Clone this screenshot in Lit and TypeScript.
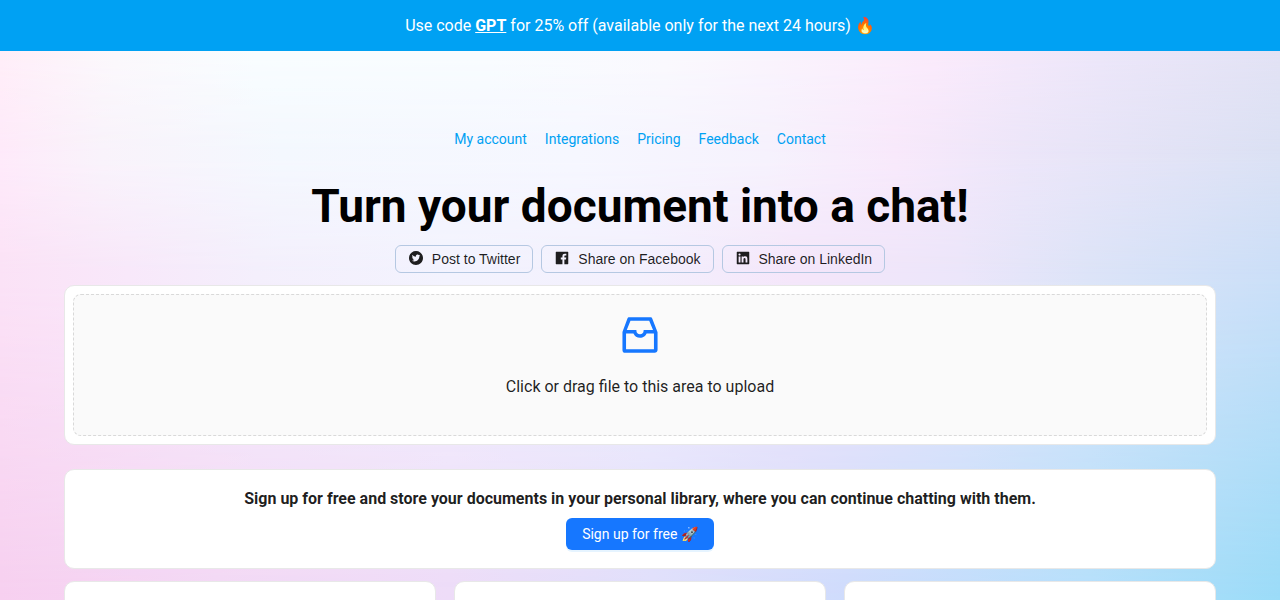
import { LitElement, html, css } from "lit";
import { customElement } from "lit/decorators.js";

const TWITTER =
  "M512 64C264.6 64 64 264.6 64 512s200.6 448 448 448 448-200.6 448-448S759.4 64 512 64zm215.3 337.7c.3 4.7.3 9.6.3 14.4 0 146.8-111.8 315.9-316.1 315.9-63 0-121.4-18.3-170.6-49.8 9 1 17.6 1.4 26.8 1.4 52 0 99.8-17.6 137.9-47.4-48.8-1-89.8-33-103.8-77 17.1 2.5 32.5 2.5 50.1-2a111 111 0 01-88.9-109v-1.4c14.7 8.3 32 13.4 50.1 14.1a111.13 111.13 0 01-49.5-92.4c0-20.7 5.4-39.6 15.1-56a315.28 315.28 0 00229 116.1C492 353.1 548.4 292 616.2 292c32 0 60.8 13.4 81.1 35 25.1-4.7 49.1-14.1 70.5-26.7-8.3 25.7-25.7 47.4-48.8 61.1 22.4-2.4 44-8.6 64-17.3-15.1 22.2-34 41.9-55.7 57.6z";
const FACEBOOK =
  "M880 112H144c-17.7 0-32 14.3-32 32v736c0 17.7 14.3 32 32 32h736c17.7 0 32-14.3 32-32V144c0-17.7-14.3-32-32-32zm-92.4 233.5h-63.9c-50.1 0-59.8 23.8-59.8 58.8v77.1h119.6l-15.6 120.7h-104V912H539.2V602.2H434.9V481.4h104.3v-89c0-103.3 63.1-159.6 155.3-159.6 44.2 0 82.1 3.3 93.2 4.8v107.9z";
const LINKEDIN =
  "M880 112H144c-17.7 0-32 14.3-32 32v736c0 17.7 14.3 32 32 32h736c17.7 0 32-14.3 32-32V144c0-17.7-14.3-32-32-32zM349.3 793.7H230.6V411.9h118.7v381.8zm-59.3-434a68.8 68.8 0 1168.8-68.8c-.1 38-30.9 68.8-68.8 68.8zm503.7 434H675.1V608c0-44.3-.8-101.2-61.7-101.2-61.7 0-71.2 48.2-71.2 98v188.9H423.7V411.9h113.8v52.2h1.6c15.8-30 54.5-61.7 112.3-61.7 120.2 0 142.3 79.1 142.3 181.9v209.4z";
const INBOX =
  "M885.2 446.3l-.2-.8-112.2-285.1c-5-16.1-19.9-27.2-36.8-27.2H281.2c-17 0-32.1 11.3-36.9 27.6L139.4 443l-.3.7-.2.8c-1.3 4.9-1.7 9.9-1 14.8-.1 1.6-.2 3.2-.2 4.8V830a60.9 60.9 0 0060.8 60.8h627.2c33.5 0 60.8-27.3 60.9-60.8V464.1c0-1.3 0-2.6-.1-3.7.4-4.9 0-9.6-1.3-14.1zm-295.8-43l-.3 15.7c-.8 44.9-31.8 75.1-77.1 75.1-22.1 0-41.1-7.1-54.8-20.6S436 441.2 435.6 419l-.3-15.7H229.5L309 210h399.2l81.7 193.3H589.4zm-375 76.8h157.3c24.3 57.1 76 90.8 140.4 90.8 33.7 0 65-9.4 90.3-27.2 22.2-15.6 39.5-37.4 50.7-63.6h156.5V814H214.4V480.1z";

const icon = (path: string) =>
  html`<svg class="icon" viewBox="0 0 1024 1024" aria-hidden="true"><path d=${path}></path></svg>`;

const LINKS = ["My account", "Integrations", "Pricing", "Feedback", "Contact"];
const SHARES = [
  { label: "Post to Twitter", path: TWITTER },
  { label: "Share on Facebook", path: FACEBOOK },
  { label: "Share on LinkedIn", path: LINKEDIN },
];

@customElement("app-root")
export class AppRoot extends LitElement {
  static styles = css`
    :host {
      display: block;
      position: relative;
      isolation: isolate;
      height: 100vh;
      overflow: hidden;
      font-family: Roboto, "Noto Sans", sans-serif;
      font-size: 14px;
      line-height: 22px;
      color: rgba(0, 0, 0, 0.88);
    }
    * {
      box-sizing: border-box;
    }
    /* Backdrop: horizontal colour ramps that fade into one another downwards. */
    .wash {
      position: absolute;
      inset: 0;
      z-index: -1;
    }
    .low {
      background: linear-gradient(to right, #f7d0f0, #f4d8f5 17%, #eedcf8 35%, #e0dffb 51%, #cfdcfc 66%, #b5e0fb 85%, #9bdcf8);
    }
    .mid {
      background: linear-gradient(to right, #fbe2f6, #f8e8fa 10%, #f4effc 20%, #f3f3fe 35%, #f3f0fd 50%, #f5e6fa 62%, #ece6fa 75%, #dde4f8 85%, #cbdff8);
      mask-image: linear-gradient(to bottom, #000 46%, transparent);
    }
    .upper {
      background: linear-gradient(to right, #feeafa, #f9f3fb 8%, #f4f8fe 22%, #f6f7ff 45%, #f6f2fd 60%, #f8e9fb 70%, #ece6f9 80%, #dbe1f4);
      mask-image: linear-gradient(to bottom, #000 26%, transparent 46%);
    }
    .high {
      background: linear-gradient(to right, #ffeef8, #fbf8fc 9%, #f8fdff 20%, #f8fcff 38%, #faf9fe 52%, #faeefc 68%, #faeafb 73%, #ece6f9 86%, #e2e2f4);
      mask-image: linear-gradient(to bottom, #000 9%, transparent 26%);
    }
    .banner {
      padding: 15px 16px 14px;
      background: #00a1f3;
      color: #fff;
      font-size: 16px;
      text-align: center;
    }
    .code {
      font-weight: 700;
      text-decoration: underline;
    }
    .page {
      padding: 77px 5% 0;
    }
    .nav {
      display: flex;
      flex-wrap: wrap;
      justify-content: center;
      gap: 18px;
    }
    .link {
      color: #00a1f3;
      text-decoration: none;
    }
    .title {
      margin: 28px 0 11px;
      color: #000;
      font-size: 46px;
      line-height: 56px;
      font-weight: 700;
      text-align: center;
    }
    .shares {
      display: flex;
      flex-wrap: wrap;
      justify-content: center;
      gap: 8px;
    }
    .share {
      display: flex;
      align-items: center;
      gap: 8px;
      height: 28px;
      padding: 0 12px;
      border: 1px solid #b5c8e2;
      border-radius: 6px;
      background: transparent;
      color: rgba(0, 0, 0, 0.88);
      font: 14px/22px "Liberation Sans", Arial, sans-serif;
      cursor: pointer;
    }
    .icon {
      display: block;
      width: 16px;
      height: 16px;
      margin-bottom: 2px;
      fill: currentColor;
    }
    .card {
      border: 1px solid #e8e8e8;
      border-radius: 10px;
      background: #fff;
    }
    .upload {
      margin-top: 12px;
      padding: 8px;
    }
    .drop {
      display: flex;
      flex-direction: column;
      align-items: center;
      gap: 16px;
      width: 100%;
      padding: 16px 16px 36px;
      border: 1px dashed #d9d9d9;
      border-radius: 8px;
      background: #fafafa;
      color: inherit;
      font: 16px/24px Roboto, sans-serif;
      cursor: pointer;
    }
    .inbox {
      color: #1677ff;
    }
    .inbox .icon {
      width: 48px;
      height: 48px;
      margin-bottom: 0;
    }
    .signup {
      display: flex;
      flex-direction: column;
      align-items: center;
      gap: 6px;
      margin-top: 24px;
      padding: 16px 16px 18px;
    }
    .pitch {
      margin: 0;
      font-size: 16px;
      line-height: 26px;
      font-weight: 700;
      text-align: center;
    }
    .primary {
      height: 32px;
      padding: 0 16px;
      border: 0;
      border-radius: 6px;
      background: #1677ff;
      box-shadow: 0 2px 0 rgba(5, 145, 255, 0.1);
      color: #fff;
      font: 14px/22px Roboto, sans-serif;
      cursor: pointer;
    }
    .row {
      display: grid;
      grid-template-columns: repeat(3, 1fr);
      gap: 18px;
      margin-top: 12px;
    }
    .tile {
      min-height: 240px;
    }
  `;

  render() {
    return html`
      <div class="wash low"></div>
      <div class="wash mid"></div>
      <div class="wash upper"></div>
      <div class="wash high"></div>
      <div class="banner">
        Use code <span class="code">GPT</span> for 25% off (available only for the next 24 hours) 🔥
      </div>
      <main class="page">
        <nav class="nav">${LINKS.map((label) => html`<a class="link" href="#">${label}</a>`)}</nav>
        <h1 class="title">Turn your document into a chat!</h1>
        <div class="shares">
          ${SHARES.map(
            (s) => html`<button class="share" type="button">${icon(s.path)}<span>${s.label}</span></button>`
          )}
        </div>
        <section class="card upload">
          <button class="drop" type="button">
            <span class="inbox">${icon(INBOX)}</span>
            <span>Click or drag file to this area to upload</span>
          </button>
        </section>
        <section class="card signup">
          <p class="pitch">
            Sign up for free and store your documents in your personal library, where you can continue chatting with them.
          </p>
          <button class="primary" type="button">Sign up for free 🚀</button>
        </section>
        <div class="row">
          <section class="card tile"></section>
          <section class="card tile"></section>
          <section class="card tile"></section>
        </div>
      </main>
    `;
  }
}
